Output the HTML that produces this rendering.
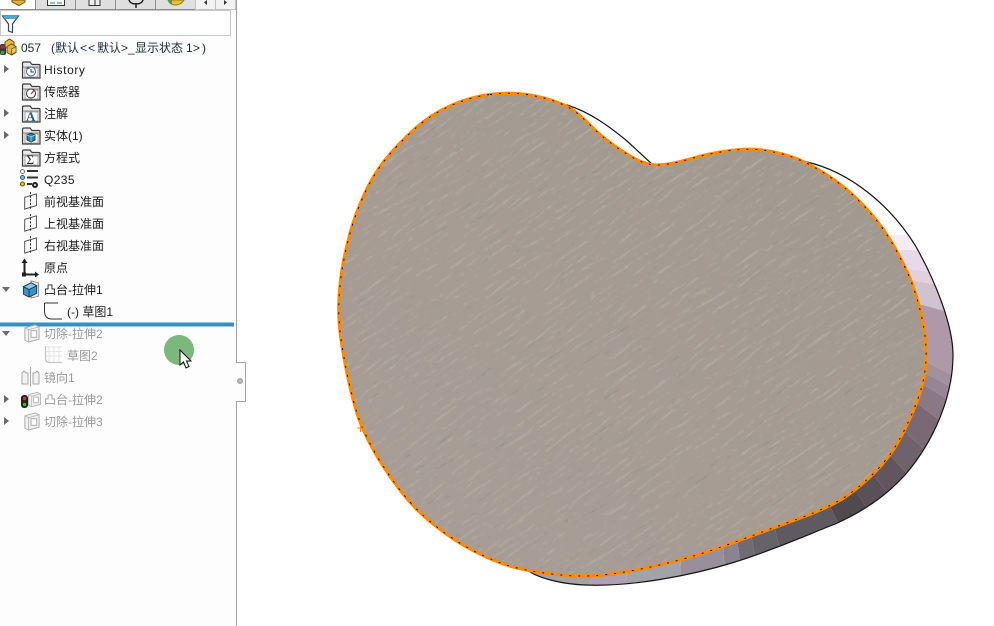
<!DOCTYPE html>
<html><head><meta charset="utf-8">
<style>
html,body{margin:0;padding:0;background:#fff;overflow:hidden}
#r{position:relative;width:994px;height:626px;overflow:hidden;background:#fff;font-family:"Liberation Sans","Noto Sans CJK SC",sans-serif;font-size:12px;color:#1c1c1c}
svg{position:absolute;left:0;top:0}
.t{position:absolute;line-height:16px;white-space:pre}
.g{color:#9a9a9a}
.n{color:#1b2a44;top:40px}
</style></head><body><div id="r">
<svg width="994" height="626" viewBox="0 0 994 626">
<defs>
<path id="back" d="M567 105C590 112 610 127 627 141L653 165L807 162C850 172 890 205 915 245C935 280 953 325 953 355C953 395 935 440 905 475C885 497 860 513 835 524C800 538 770 551 735 562C690 576 630 587 585 585C560 584 540 578 530 572Z"/>
<path id="front" d="M490 94.500Q510 92 526.500 94.500Q543 97 556.500 102Q570 107 577.500 113.500Q585 120 592.500 127.500Q600 135 610 142.500Q620 150 630 156Q640 162 648.500 164Q657 166 668.500 164Q680 162 693.500 158Q707 154 727 151Q747 148 762 150Q777 152 792 157Q807 162 827 175Q847 188 863.500 205.500Q880 223 890.500 240.500Q901 258 908.500 275Q916 292 921.500 316Q927 340 926 360Q925 380 917.500 400Q910 420 900 438.500Q890 457 875 472Q860 487 845 497Q830 507 801.500 517.500Q773 528 736.500 541.500Q700 555 670 562.500Q640 570 611.500 574Q583 578 551.500 574Q520 570 503.500 564Q487 558 472 550Q457 542 443.500 532Q430 522 420 512.500Q410 503 400 490Q390 477 381.500 463.500Q373 450 366.500 436.500Q360 423 356.500 411.500Q353 400 349 382.500Q345 365 341.500 342.500Q338 320 339 300Q340 280 343 264Q346 248 350.500 231.500Q355 215 364 195Q373 175 385 160Q397 145 413.500 130Q430 115 450 106Q470 97 490 94.500Z"/>
<clipPath id="cb"><use href="#back"/></clipPath>
<clipPath id="cf"><use href="#front"/></clipPath>
<linearGradient id="fg2" x1="0" y1="1" x2="1" y2="0"><stop offset="0" stop-color="#a99e97"/><stop offset=".55" stop-color="#a59b93"/><stop offset="1" stop-color="#9f988e"/></linearGradient>
<filter id="n1" x="0" y="0" width="100%" height="100%" color-interpolation-filters="sRGB">
<feTurbulence type="fractalNoise" baseFrequency=".28" numOctaves="1" seed="5"/>
<feColorMatrix values="0 0 0 0 0 0 0 0 0 0 0 0 0 0 0 1 0 0 0 0" result="a"/>
<feOffset dx="2" dy="-1.4" result="o1"/><feComposite in="a" in2="o1" operator="arithmetic" k2=".5" k3=".5" result="b"/>
<feOffset in="b" dx="4" dy="-2.8" result="o2"/><feComposite in="b" in2="o2" operator="arithmetic" k2=".5" k3=".5" result="c"/>
<feOffset in="c" dx="8" dy="-5.6" result="o3"/><feComposite in="c" in2="o3" operator="arithmetic" k2=".5" k3=".5" result="d"/>
<feColorMatrix in="d" values="0 0 0 0 .69 0 0 0 0 .66 0 0 0 0 .61 0 0 0 14 -7.35"/>
</filter>
<filter id="n2" x="0" y="0" width="100%" height="100%" color-interpolation-filters="sRGB">
<feTurbulence type="fractalNoise" baseFrequency=".28" numOctaves="1" seed="23"/>
<feColorMatrix values="0 0 0 0 0 0 0 0 0 0 0 0 0 0 0 1 0 0 0 0" result="a"/>
<feOffset dx="2" dy="-1.4" result="o1"/><feComposite in="a" in2="o1" operator="arithmetic" k2=".5" k3=".5" result="b"/>
<feOffset in="b" dx="4" dy="-2.8" result="o2"/><feComposite in="b" in2="o2" operator="arithmetic" k2=".5" k3=".5" result="c"/>
<feOffset in="c" dx="8" dy="-5.6" result="o3"/><feComposite in="c" in2="o3" operator="arithmetic" k2=".5" k3=".5" result="d"/>
<feColorMatrix in="d" values="0 0 0 0 .60 0 0 0 0 .58 0 0 0 0 .53 0 0 0 14 -7.75"/>
</filter>
<symbol id="folder" viewBox="0 0 20 20"><path d="M1.500 18V3.500Q1.500 2 3 2H9L11 4.500H18Q19 4.500 19 5.500V18Z" fill="#e9e9e9" stroke="#3c3c3c" stroke-width="1.200"/><path d="M2 7H18.500" stroke="#8a8a8a"/><rect x="4" y="8" width="13" height="9" fill="#fff" stroke="#777" stroke-width=".6"/></symbol>
<symbol id="plane" viewBox="0 0 20 20"><path d="M3 6L16 2V15L3 19Z" fill="#fff" stroke="#444"/><path d="M9.500 0V20" stroke="#222" stroke-dasharray="2.500 1.500"/></symbol>
<symbol id="ext" viewBox="0 0 20 20"><path d="M10 1L18 3V17L10 19Z" fill="#eee" stroke="#888"/><path d="M2 7L10 3L16 6V14L8 18L2 15Z" fill="#3c93c4" stroke="#123f60"/><path d="M2 7L8 10V18M8 10L16 6" stroke="#123f60" fill="none"/><path d="M2 7L10 3L16 6L8 10Z" fill="#8cc6e4" stroke="#123f60"/></symbol>
<symbol id="cut" viewBox="0 0 20 20"><path d="M3 4L14 1L18 3V16L7 19L3 17Z" fill="#f0f0f0" stroke="#aaa"/><path d="M7 6L18 3M7 6V19M7 6L3 4" stroke="#bbb" fill="none"/><rect x="9.500" y="7" width="6" height="7" fill="#fff" stroke="#aaa"/></symbol>
</defs>

<!-- 3D body -->
<use href="#back" fill="#fff"/>
<g clip-path="url(#cb)">
<polygon points="700,245 993,230 993,252" fill="#f6ecf8"/>
<polygon points="700,245 993,252 993,279" fill="#e8d9ea"/>
<polygon points="700,245 993,279 993,294" fill="#e2d0dc"/>
<polygon points="700,245 993,294 993,324" fill="#d0c2ce"/>
<polygon points="700,245 993,324 993,396" fill="#ae99a9"/>
<polygon points="700,245 993,396 993,411" fill="#a48f9f"/>
<polygon points="700,245 993,411 993,428" fill="#968692"/>
<polygon points="700,245 993,428 993,459" fill="#8a7886"/>
<polygon points="700,245 993,459 993,512" fill="#7a6874"/>
<polygon points="700,245 993,512 993,569" fill="#70626a"/>
<polygon points="700,245 993,569 993,625 987,625" fill="#625460"/>
<polygon points="700,245 987,625 941,625" fill="#5a5058"/>
<polygon points="700,245 941,625 889,625" fill="#504a4c"/>
<polygon points="700,245 889,625 800,625" fill="#5f5a60"/>
<polygon points="700,245 800,625 767,625" fill="#66626a"/>
<polygon points="700,245 767,625 748,625" fill="#6f6a74"/>
<polygon points="700,245 748,625 729,625" fill="#8a8490"/>
<polygon points="700,245 729,625 677,625" fill="#9a8e9a"/>
<polygon points="700,245 677,625 616,625" fill="#a3a2a9"/>
<polygon points="700,245 616,625 577,625" fill="#b09fb0"/>
<polygon points="700,245 577,625 400,625" fill="#a3a2a9"/>
</g>
<use href="#back" fill="none" stroke="#151515" stroke-width="1.200"/>
<use href="#front" fill="url(#fg2)"/>
<g clip-path="url(#cf)">
<rect x="300" y="60" width="690" height="560" filter="url(#n1)"/>
<rect x="300" y="60" width="690" height="560" filter="url(#n2)"/>
</g>
<use href="#front" fill="none" stroke="#ff8a00" stroke-width="3.200"/>
<use href="#front" fill="none" stroke="#111" stroke-width="1" stroke-dasharray="2 7"/>
<path d="M357 428H364M360.500 424V432" stroke="#ff8a00" fill="none"/>

<!-- panel -->
<rect x="0" y="0" width="236" height="626" fill="#fdfdfd"/>
<path d="M236.500 0V362.500H245.500V401.500H236.500V626" fill="#fdfdfd" stroke="#a3a3a3"/>
<circle cx="240" cy="381" r="2.500" fill="#bbb" stroke="#888" stroke-width=".7"/>
<!-- tabs -->
<rect x="36" y="0" width="159" height="9" fill="#dfdfdf"/>
<rect x="196" y="0" width="40" height="9" fill="#f2f2f2"/>
<path d="M0 9.500H35.500V0M35.500 9.500H195.500M75.500 0V9M115.500 0V9M155.500 0V9" stroke="#8f8f8f" fill="none"/>
<path d="M195.500 0V10M215.500 0V9M235.500 0V9M196 9.500H236" stroke="#c2c2c2" fill="none"/>
<path d="M12 0V2L19 5.500L25 2V0Z" fill="#e8b030" stroke="#7a5a10"/>
<path d="M47.500 0V5.500H64.500V0" fill="#fff" stroke="#333"/><path d="M50 3H55M57 3H62" stroke="#2a7fb0"/>
<path d="M89 0V5.500H100V0M95 0V5" fill="#eee" stroke="#333"/>
<path d="M129 0Q130 4 136 4T143 0M136 3V8" fill="none" stroke="#222" stroke-width="1.500"/>
<path d="M168 0Q170 5 175.500 5T184 0Z" fill="#e8c428" stroke="#8a7a20"/><path d="M168 0Q169 3 172 4V0Z" fill="#40a040"/>
<path d="M207 0L204 2.500L207 5Z" fill="#333"/><path d="M224 0L227 2.500L224 5Z" fill="#333"/>
<!-- filter box -->
<rect x="0.500" y="10.500" width="230" height="25" fill="#fff" stroke="#c8c8c8"/>
<path d="M2.500 16H18.500L12.500 24V32.500L8.500 31V24Z" fill="#fff" stroke="#33475a" stroke-width="1.200"/>
<path d="M3 16H18L16 19H5Z" fill="#4fa8cf"/>
<!-- root icon -->
<rect x="0" y="44" width="6" height="11" rx="2" fill="#3a3a3a"/>
<circle cx="2.500" cy="47" r="1.800" fill="#c23"/><circle cx="2.500" cy="52.500" r="1.800" fill="#3a3"/>
<path d="M5 42L9.500 39L14 42V47L9.500 49.500L5 47Z" fill="#eeb93a" stroke="#6a5010"/>
<path d="M7 46.500L11.500 44L16 46.500V52.500L11.500 55L7 52.500Z" fill="#edb535" stroke="#6a5010"/>
<path d="M11.500 49L16 46.800V52L11.500 54.500Z" fill="#f3c95a" stroke="#6a5010" stroke-width=".7"/>

<!-- tree arrows -->
<g fill="#6b6b6b">
<path d="M4 65L9 69L4 73Z"/><path d="M4 109L9 113L4 117Z"/><path d="M4 131L9 135L4 139Z"/>
<path d="M2 287H10L6 292Z"/><path d="M2 331H10L6 336Z"/>
<path d="M4 395L9 399L4 403Z"/><path d="M4 417L9 421L4 425Z"/>
</g>

<!-- folders -->
<use href="#folder" x="21" y="60" width="20" height="20"/>
<circle cx="31" cy="71.500" r="4.500" fill="#fff" stroke="#2c7098"/><path d="M31 69V72H34" stroke="#333" fill="none"/><path d="M26 69L28 66L30 69Z" fill="#2c7098"/>
<use href="#folder" x="21" y="82" width="20" height="20"/>
<circle cx="31" cy="93.500" r="4.500" fill="#fff" stroke="#333"/><path d="M31 94L34 90.500" stroke="#d33" stroke-width="1.300"/>
<use href="#folder" x="21" y="104" width="20" height="20"/>
<text x="26" y="121" font-family="Liberation Serif,serif" font-size="13" font-weight="bold" fill="#1f5f90">A</text>
<use href="#folder" x="21" y="126" width="20" height="20"/>
<path d="M27 135L31 133L35 135V140L31 142L27 140Z" fill="#2f7fa8" stroke="#123f60"/><path d="M27 135L31 137L35 135M31 137V142" stroke="#bde" fill="none" stroke-width=".7"/>
<use href="#folder" x="21" y="148" width="20" height="20"/>
<text x="26.500" y="164" font-family="Liberation Serif,serif" font-size="13" fill="#222">Σ</text>
<!-- Q235 icon -->
<circle cx="22.500" cy="171.500" r="2" fill="#fff" stroke="#777"/><path d="M27 171H38" stroke="#333" stroke-width="2"/>
<circle cx="22.500" cy="177.500" r="2" fill="#7cc0e8" stroke="#357"/><path d="M27 177.500H38" stroke="#333" stroke-width="2"/>
<circle cx="22.500" cy="184" r="2" fill="#efc020" stroke="#750"/><path d="M27 184H32" stroke="#333" stroke-width="2"/>
<circle cx="35" cy="185" r="3" fill="#222"/><circle cx="35" cy="185" r="1" fill="#fff"/>
<!-- planes -->
<use href="#plane" x="22" y="191" width="18" height="20"/>
<use href="#plane" x="22" y="213" width="18" height="20"/>
<use href="#plane" x="22" y="235" width="18" height="20"/>
<!-- origin -->
<path d="M24.500 261V274.500H37" fill="none" stroke="#222" stroke-width="2"/>
<path d="M24.500 258.500L21.500 263H27.500ZM39 274.500L35 271.500V277.500Z" fill="#222"/><rect x="22" y="272.500" width="4" height="4" fill="#222"/>
<!-- features -->
<use href="#ext" x="21" y="280" width="20" height="19"/>
<path d="M44.500 303V311Q44.500 319 52 319H62M44.500 303H58" fill="none" stroke="#333"/>
<rect x="0" y="322.500" width="234" height="4" fill="#388fc7"/>
<use href="#cut" x="22" y="324" width="19" height="19"/>
<!-- sketch2 -->
<path d="M45 347H62M45 351.500H62M45 356H62M49 346V362M54 346V362M59 346V362" stroke="#e3e3ee"/>
<path d="M45.500 346V358Q45.500 362.500 50 362.500H62" fill="none" stroke="#c5c5c5" stroke-width="1.300"/>
<!-- mirror -->
<path d="M30.500 367V386" stroke="#aaa"/>
<path d="M22 384V373L24 371L26 373H28V384Z" fill="#f2f2f2" stroke="#a8a8a8"/>
<path d="M39 384V373L37 371L35 373H33V384Z" fill="#f2f2f2" stroke="#a8a8a8"/>
<!-- boss2 with traffic light -->
<use href="#cut" x="26" y="390" width="16" height="19"/>
<rect x="21" y="395" width="7" height="13" rx="3" fill="#222"/><circle cx="24.500" cy="398.500" r="1.700" fill="#d33"/><circle cx="24.500" cy="404.500" r="1.700" fill="#3b3"/>
<use href="#cut" x="22" y="412" width="19" height="19"/>
<!-- green dot & cursor -->
<circle cx="179" cy="350" r="15" fill="#7cb87b"/>
<path d="M180 350V365L183.500 362L186 368L189 366.500L186.500 361H191Z" fill="#fff" stroke="#111" stroke-width="1"/>
</svg>

<span class="t n" style="left:21px">057</span>
<span class="t n" style="left:51px">(默认</span>
<span class="t n" style="left:80px">&lt;</span>
<span class="t n" style="left:88px">&lt;</span>
<span class="t n" style="left:97px">默认</span>
<span class="t n" style="left:121px">&gt;</span>
<span class="t n" style="left:128px">_</span>
<span class="t n" style="left:135px">显示状态</span>
<span class="t n" style="left:186px">1</span>
<span class="t n" style="left:193px">&gt;</span>
<span class="t n" style="left:202px">)</span>
<span class="t" style="left:44px;top:62px;letter-spacing:.6px">History</span>
<span class="t" style="left:44px;top:84px">传感器</span>
<span class="t" style="left:44px;top:106px">注解</span>
<span class="t" style="left:44px;top:128px">实体(1)</span>
<span class="t" style="left:44px;top:150px">方程式</span>
<span class="t" style="left:44px;top:172px;letter-spacing:.4px">Q235</span>
<span class="t" style="left:44px;top:194px">前视基准面</span>
<span class="t" style="left:44px;top:216px">上视基准面</span>
<span class="t" style="left:44px;top:238px">右视基准面</span>
<span class="t" style="left:44px;top:260px">原点</span>
<span class="t" style="left:44px;top:282px">凸台-拉伸1</span>
<span class="t" style="left:67px;top:304px">(-) 草图1</span>
<span class="t g" style="left:44px;top:326px">切除-拉伸2</span>
<span class="t g" style="left:67px;top:348px">草图2</span>
<span class="t g" style="left:44px;top:370px">镜向1</span>
<span class="t g" style="left:44px;top:392px">凸台-拉伸2</span>
<span class="t g" style="left:44px;top:414px">切除-拉伸3</span>
</div></body></html>
